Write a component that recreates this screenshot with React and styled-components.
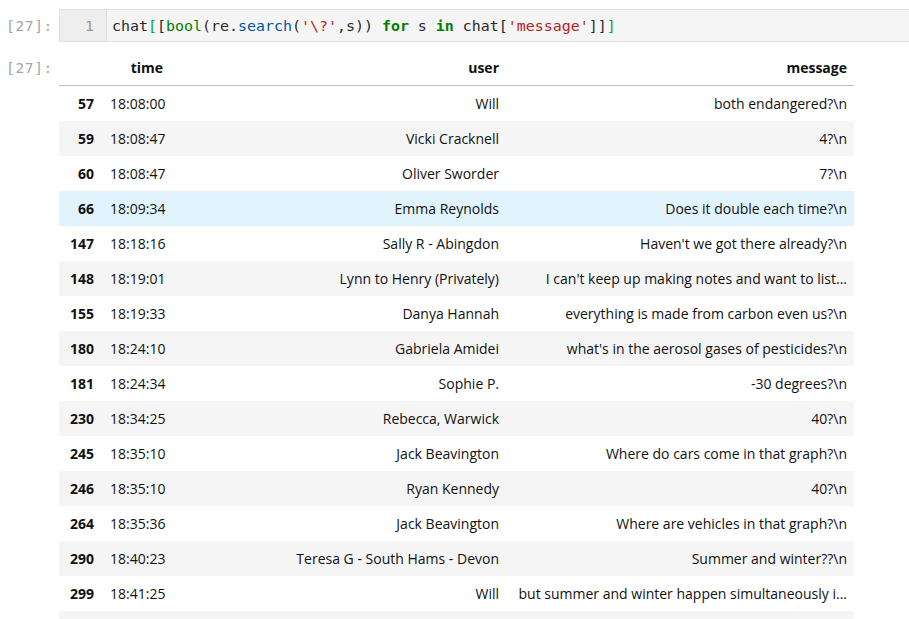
import React from "react";
import styled, { createGlobalStyle } from "styled-components";

const Global = createGlobalStyle`
  html, body { margin: 0; padding: 0; background: #fff; }
  body { font-family: "Open Sans", "Noto Sans", sans-serif; overflow: hidden; }
`;

const Notebook = styled.div`
  display: flex;
  flex-direction: column;
  padding-top: 9px;
  gap: 8px;
`;

const Cell = styled.div`
  display: flex;
  align-items: ${(p) => (p.$top ? "flex-start" : "center")};
`;

const Prompt = styled.div`
  flex: 0 0 59px;
  box-sizing: border-box;
  padding-right: 6px;
  text-align: right;
  font-family: "DejaVu Sans Mono", monospace;
  font-size: 14.6px;
  color: #a5a5a5;
  letter-spacing: 0.6px;
  line-height: ${(p) => p.$lh || "33px"};
`;

const Editor = styled.div`
  flex: 1;
  display: flex;
  height: 33px;
  box-sizing: border-box;
  background: #f5f5f5;
  border: 1px solid #e0e0e0;
  border-right: none;
`;

const Gutter = styled.div`
  flex: 0 0 47px;
  box-sizing: border-box;
  padding-right: 12px;
  text-align: right;
  background: #eeeeee;
  border-right: 1px solid #dddddd;
  color: #999;
  font-family: "DejaVu Sans Mono", monospace;
  font-size: 14.9px;
  line-height: 32px;
`;

const Code = styled.pre`
  margin: 0;
  padding-left: 5px;
  font-family: "DejaVu Sans Mono", monospace;
  font-size: 14.95px;
  line-height: 32px;
  color: #2a2a2a;
`;

const Tok = styled.span`
  color: ${(p) => p.$c};
  font-weight: ${(p) => (p.$b ? 700 : 400)};
`;

const Table = styled.table`
  border-collapse: collapse;
  table-layout: fixed;
  width: 795px;
  font-size: 14px;
  color: #111;
`;

const Col = styled.col`
  width: ${(p) => p.$w}px;
`;

const Head = styled.th`
  height: 35px;
  padding: 0 7px;
  text-align: right;
  font-weight: 700;
  border-bottom: 1px solid #bdbdbd;
  white-space: nowrap;
`;

const Row = styled.tr`
  height: 35px;
  background: ${(p) => (p.$hover ? "#e1f4fd" : p.$odd ? "#f5f5f5" : "#fff")};
`;

const Idx = styled.th`
  padding: 0 9px 0 0;
  text-align: right;
  font-weight: 700;
`;

const Td = styled.td`
  padding: 0 7px;
  text-align: right;
  white-space: nowrap;
  overflow: hidden;
`;

const rows = [
  ["57", "18:08:00", "Will", "both endangered?\\n"],
  ["59", "18:08:47", "Vicki Cracknell", "4?\\n"],
  ["60", "18:08:47", "Oliver Sworder", "7?\\n"],
  ["66", "18:09:34", "Emma Reynolds", "Does it double each time?\\n"],
  ["147", "18:18:16", "Sally R - Abingdon", "Haven't we got there already?\\n"],
  ["148", "18:19:01", "Lynn to Henry (Privately)", "I can't keep up making notes and want to list..."],
  ["155", "18:19:33", "Danya Hannah", "everything is made from carbon even us?\\n"],
  ["180", "18:24:10", "Gabriela Amidei", "what's in the aerosol gases of pesticides?\\n"],
  ["181", "18:24:34", "Sophie P.", "-30 degrees?\\n"],
  ["230", "18:34:25", "Rebecca, Warwick", "40?\\n"],
  ["245", "18:35:10", "Jack Beavington", "Where do cars come in that graph?\\n"],
  ["246", "18:35:10", "Ryan Kennedy", "40?\\n"],
  ["264", "18:35:36", "Jack Beavington", "Where are vehicles in that graph?\\n"],
  ["290", "18:40:23", "Teresa G - South Hams - Devon", "Summer and winter??\\n"],
  ["299", "18:41:25", "Will", "but summer and winter happen simultaneously i..."],
  ["", "", "", ""],
];

export default function App() {
  return (
    <>
      <Global />
      <Notebook>
        <Cell>
          <Prompt>[27]:</Prompt>
          <Editor>
            <Gutter>1</Gutter>
            <Code>
              chat<Tok $c="#00b000">[</Tok>[<Tok $c="#008000">bool</Tok>(re.
              <Tok $c="#0055aa">search</Tok>(<Tok $c="#ba2121">'\?'</Tok>,s)){" "}
              <Tok $c="#008000" $b>for</Tok> s <Tok $c="#008000" $b>in</Tok> chat[
              <Tok $c="#ba2121">'message'</Tok>]]<Tok $c="#00b000">]</Tok>
            </Code>
          </Editor>
        </Cell>
        <Cell $top>
          <Prompt $lh="35px">[27]:</Prompt>
          <Table>
            <colgroup>
              <Col $w={44} />
              <Col $w={67} />
              <Col $w={336} />
              <Col $w={348} />
            </colgroup>
            <thead>
              <tr>
                <Head />
                <Head>time</Head>
                <Head>user</Head>
                <Head>message</Head>
              </tr>
            </thead>
            <tbody>
              {rows.map((r, i) => (
                <Row key={i} $odd={i % 2 === 1} $hover={r[0] === "66"}>
                  <Idx>{r[0]}</Idx>
                  <Td>{r[1]}</Td>
                  <Td>{r[2]}</Td>
                  <Td>{r[3]}</Td>
                </Row>
              ))}
            </tbody>
          </Table>
        </Cell>
      </Notebook>
    </>
  );
}
